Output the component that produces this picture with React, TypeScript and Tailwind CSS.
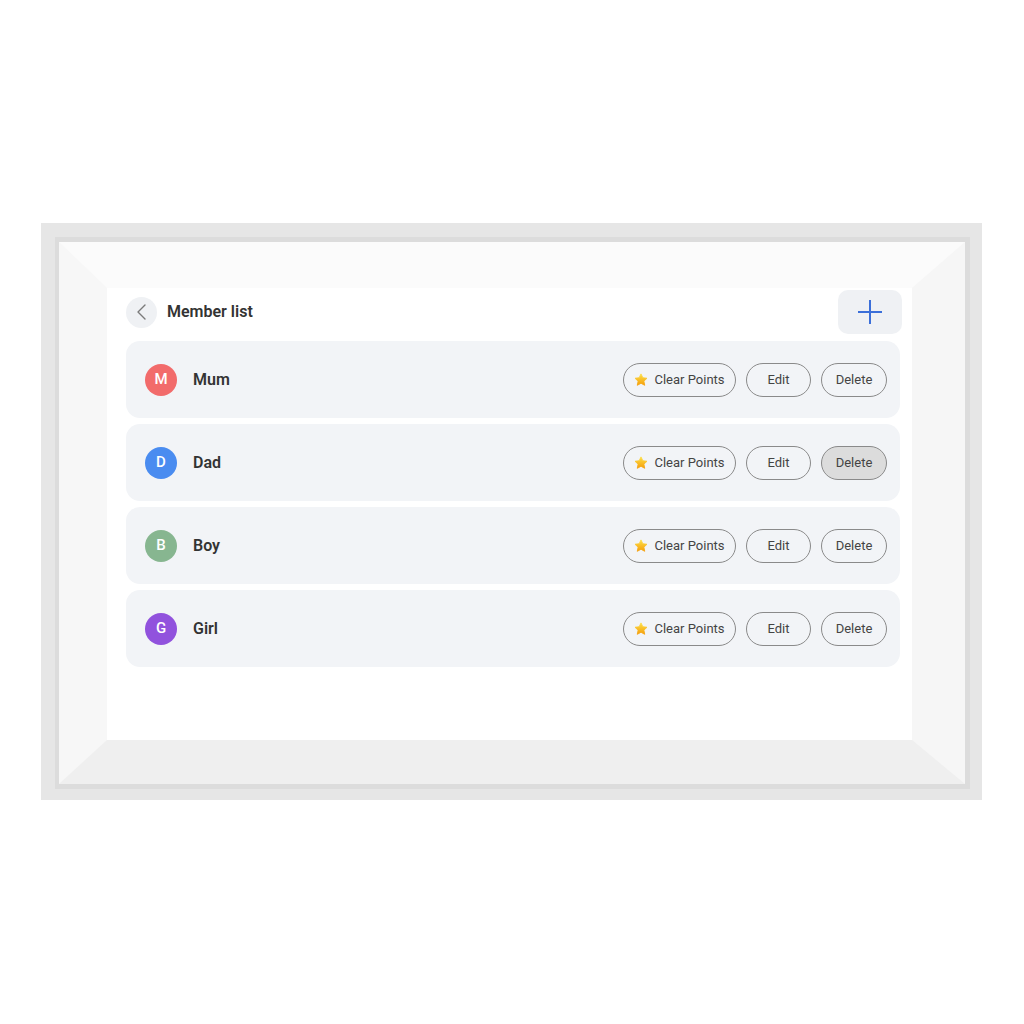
const members = [
  { name: 'Mum', letter: 'M', color: 'bg-[#f26b6b]', pressed: false },
  { name: 'Dad', letter: 'D', color: 'bg-[#4a8cf0]', pressed: true },
  { name: 'Boy', letter: 'B', color: 'bg-[#87b690]', pressed: false },
  { name: 'Girl', letter: 'G', color: 'bg-[#9152dd]', pressed: false },
];

function Star() {
  return (
    <svg width="14" height="14" viewBox="0 0 24 24">
      <defs>
        <linearGradient id="st" x1="0" y1="0" x2="0" y2="1">
          <stop offset="0" stopColor="#fde047" />
          <stop offset="1" stopColor="#f59e0b" />
        </linearGradient>
      </defs>
      <path
        d="M12 1.5l3.1 6.6 7.2.9-5.3 5 1.4 7.1L12 17.6 5.6 21.1 7 14l-5.3-5 7.2-.9z"
        fill="url(#st)"
        stroke="url(#st)"
        strokeWidth="1.5"
        strokeLinejoin="round"
      />
    </svg>
  );
}

function MemberRow({ name, letter, color, pressed }: (typeof members)[number]) {
  const btn =
    'flex h-[34px] items-center justify-center rounded-full border-[1.5px] border-[#8a8a8a] text-[13px] text-[#444]';
  return (
    <div className="flex h-[77px] items-center rounded-[14px] bg-[#f2f4f7] pl-[19px] pr-[13px]">
      <div
        className={`flex h-[32px] w-[32px] items-center justify-center rounded-full ${color} text-[15px] font-medium text-white`}
      >
        {letter}
      </div>
      <div className="ml-[16px] text-[16px] font-semibold text-[#333]">{name}</div>
      <div className="ml-auto flex items-center gap-[10px]">
        <button className={`${btn} w-[113px] gap-[6px]`}>
          <Star />
          Clear Points
        </button>
        <button className={`${btn} w-[65px]`}>Edit</button>
        <button className={`${btn} w-[66px] ${pressed ? 'bg-[#dcdcdc]' : ''}`}>Delete</button>
      </div>
    </div>
  );
}

export default function App() {
  return (
    <div
      className="h-[1024px] w-[1024px] bg-white pl-[41px] pt-[223px]"
      style={{ fontFamily: 'Roboto, "Noto Sans", sans-serif' }}
    >
      {/* photo frame */}
      <div className="h-[577px] w-[941px] bg-[#e6e6e6] pl-[14px] pt-[14px]">
        <div className="h-[552px] w-[915px] bg-[#dcdcdc] pl-[4px] pt-[5px]">
          <div className="h-[542px] w-[906px] border-b-[44px] border-l-[48px] border-r-[53px] border-t-[46px] border-b-[#efefef] border-l-[#f7f7f7] border-r-[#f6f6f6] border-t-[#fbfbfb]">
            {/* screen */}
            <div className="h-[452px] w-[805px] bg-white pt-[2px]">
              <div className="flex h-[44px] items-center justify-between pl-[19px] pr-[10px]">
                <div className="flex items-center">
                  <div className="flex h-[31px] w-[31px] items-center justify-center rounded-full bg-[#eff1f4]">
                    <svg width="16" height="18" viewBox="0 0 16 18" fill="none">
                      <path d="M11 2L4 9l7 7" stroke="#7a7a7a" strokeWidth="1.4" strokeLinecap="round" strokeLinejoin="round" />
                    </svg>
                  </div>
                  <span className="ml-[10px] text-[16px] font-semibold text-[#333]">Member list</span>
                </div>
                <div className="flex h-[44px] w-[64px] items-center justify-center rounded-[10px] bg-[#eff1f4]">
                  <svg width="26" height="26" viewBox="0 0 26 26" fill="none">
                    <path d="M13 1v24M1 13h24" stroke="#3b6fd9" strokeWidth="2" />
                  </svg>
                </div>
              </div>
              <div className="ml-[19px] mr-[12px] mt-[7px] flex flex-col gap-[6px]">
                {members.map((m) => (
                  <MemberRow key={m.name} {...m} />
                ))}
              </div>
            </div>
          </div>
        </div>
      </div>
    </div>
  );
}
